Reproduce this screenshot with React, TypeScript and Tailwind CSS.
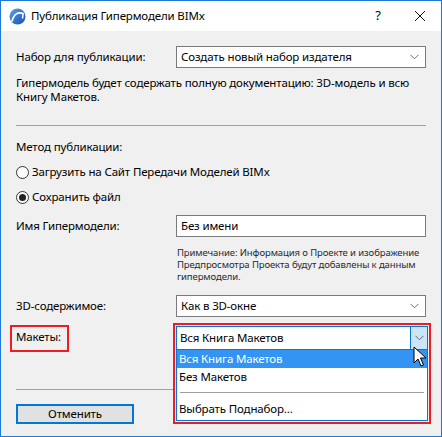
import React from 'react';

const FONT = '"Noto Sans", "Open Sans", "Liberation Sans", sans-serif';

function Chevron() {
  return (
    <svg width="9" height="6" viewBox="0 0 9 6" className="shrink-0">
      <path d="M0.5 0.8 L4.5 4.8 L8.5 0.8" fill="none" stroke="#6d6d6d" strokeWidth="1" />
    </svg>
  );
}

function Select({ value }: { value: string }) {
  return (
    <div className="w-[250px] h-[22px] bg-white border border-[#7a7a7a] flex items-center justify-between pl-[4px] pr-[6px]">
      <span className="text-[11.5px] text-black leading-none">{value}</span>
      <Chevron />
    </div>
  );
}

function Radio({ checked, label }: { checked?: boolean; label: string }) {
  return (
    <div className="h-[16px] flex items-center gap-[3px]">
      <span className="w-[13px] h-[13px] rounded-full border border-[#333] bg-white flex items-center justify-center">
        {checked && <span className="w-[7px] h-[7px] rounded-full bg-[#222]" />}
      </span>
      <span className="text-[11.5px] text-black">{label}</span>
    </div>
  );
}

function Row({ label, children, className }: { label: string; children: React.ReactNode; className?: string }) {
  return (
    <div className={`flex items-center ${className ?? ''}`}>
      <span className="w-[160px] text-[11.5px] text-black">{label}</span>
      {children}
    </div>
  );
}

export default function App() {
  return (
    <div className="relative w-[442px] h-[437px] border border-[#1c7ad6] flex flex-col bg-[#f0f0f0] tracking-[-0.15px]" style={{ fontFamily: FONT }}>
      {/* --- TITLE BAR --- */}
      <div className="h-[30px] bg-white flex items-center pl-[8px] shrink-0">
        <svg width="17" height="17" viewBox="0 0 17 17">
          <defs>
            <linearGradient id="lg" x1="0" y1="0" x2="1" y2="1">
              <stop offset="0" stopColor="#5aa0ee" />
              <stop offset="1" stopColor="#1a4fb0" />
            </linearGradient>
          </defs>
          <circle cx="8.5" cy="8.5" r="8" fill="url(#lg)" />
          <path d="M3 13 C5 6 9 3.5 14 5.5" fill="none" stroke="#fff" strokeWidth="1.8" strokeLinecap="round" />
          <path d="M14 5.5 L13.6 10" fill="none" stroke="#fff" strokeWidth="1.5" strokeLinecap="round" />
        </svg>
        <span className="ml-[5px] text-[11.5px] text-black">Публикация Гипермодели BIMx</span>
        <span className="ml-auto text-[13px] text-black w-[20px] text-center">?</span>
        <svg width="12" height="12" viewBox="0 0 12 12" className="ml-[26px] mr-[15px]">
          <path d="M1 1 L11 11 M11 1 L1 11" stroke="#111" strokeWidth="1" />
        </svg>
      </div>

      {/* --- CONTENT --- */}
      <div className="flex-1 px-[15px] flex flex-col">
        <Row label="Набор для публикации:" className="mt-[15px]">
          <Select value="Создать новый набор издателя" />
        </Row>

        <p className="mt-[8px] text-[11.5px] leading-[14px] text-black whitespace-nowrap">
          Гипермодель будет содержать полную документацию: 3D-модель и всю
          <br />
          Книгу Макетов.
        </p>

        <div className="mt-[21px] h-px bg-[#a0a0a0]" />

        <p className="mt-[13px] text-[11.5px] leading-[16px] text-black">Метод публикации:</p>
        <div className="mt-[9px]">
          <Radio label="Загрузить на Сайт Передачи Моделей BIMx" />
        </div>
        <div className="mt-[9px]">
          <Radio checked label="Сохранить файл" />
        </div>

        <Row label="Имя Гипермодели:" className="mt-[10px]">
          <div className="w-[250px] h-[22px] bg-white border border-[#7a7a7a] flex items-center pl-[4px]">
            <span className="text-[11.5px] text-black leading-none">Без имени</span>
          </div>
        </Row>

        <p className="mt-[10px] ml-[161px] text-[9.5px] leading-[12px] text-[#1f2b33] whitespace-nowrap tracking-[-0.1px]">
          Примечание: Информация о Проекте и изображение
          <br />
          Предпросмотра Проекта будут добавлены к данным
          <br />
          гипермодели.
        </p>

        <Row label="3D-содержимое:" className="mt-[12px]">
          <Select value="Как в 3D-окне" />
        </Row>

        <Row label="Макеты:" className="mt-[8px] h-[23px]">
          <div className="w-[250px] h-[23px]" />
        </Row>

        <div className="mt-[41px] h-px bg-[#a0a0a0]" />

        <div className="mt-[14px] flex gap-[12px]">
          <div className="w-[118px] h-[20px] bg-[#e1e1e1] border-2 border-[#0078d7] flex items-center justify-center">
            <span className="text-[11.5px] text-black">Отменить</span>
          </div>
          <div className="ml-[30px] w-[118px] h-[20px] bg-[#cccccc] border border-[#adadad]" />
          <div className="w-[118px] h-[20px] bg-[#e1e1e1] border border-[#adadad]" />
        </div>
      </div>

      {/* --- ANNOTATION: label highlight --- */}
      <div className="absolute left-[9px] top-[324px] w-[59px] h-[27px] border-2 border-[#ee1d23]" />

      {/* --- OPEN DROPDOWN --- */}
      <div className="absolute left-[172px] top-[322px] w-[258px] h-[101px] border-2 border-[#ee1d23] bg-[#f0f0f0] p-px">
        <div className="w-[252px] h-full border border-[#0078d7] bg-white flex flex-col">
          <div className="h-[23px] flex items-center border-b border-[#0078d7]">
            <span className="pl-[3px] text-[11.5px] text-black flex-1">Вся Книга Макетов</span>
            <div className="w-[17px] h-full bg-[#cce4f7] border-l border-[#0078d7] flex items-center justify-center">
              <Chevron />
            </div>
          </div>
          <div className="h-[18px] bg-[#3394f4] flex items-center pl-[2px]">
            <span className="text-[11.5px] text-white">Вся Книга Макетов</span>
          </div>
          <div className="h-[17px] flex items-center pl-[2px]">
            <span className="text-[11.5px] text-black">Без Макетов</span>
          </div>
          <div className="mt-[7px] mx-[3px] h-px bg-[#a0a0a0]" />
          <div className="mt-[7px] h-[17px] flex items-center pl-[2px]">
            <span className="text-[11.5px] text-black">Выбрать Поднабор...</span>
          </div>
        </div>
      </div>

      {/* --- MOUSE CURSOR --- */}
      <svg className="absolute left-[412px] top-[345px]" width="14" height="22" viewBox="0 0 14 22">
        <path d="M1 1 L1 17 L5 13 L8 20 L10.5 19 L7.5 12 L13 12 Z" fill="#fff" stroke="#000" strokeWidth="1" strokeLinejoin="round" />
      </svg>
    </div>
  );
}
